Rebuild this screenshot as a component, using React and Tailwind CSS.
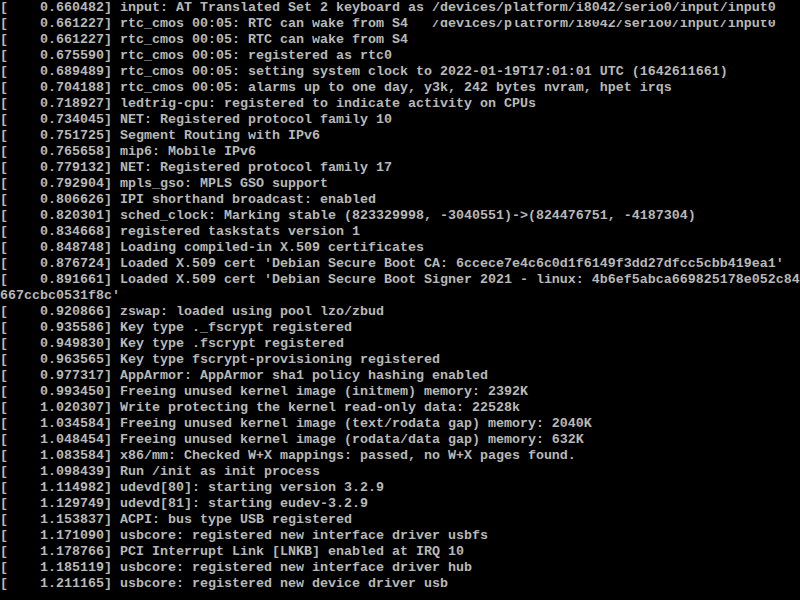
const LINES = [
  "[    0.660482] input: AT Translated Set 2 keyboard as /devices/platform/i8042/serio0/input/input0",
  null,
  "[    0.661227] rtc_cmos 00:05: RTC can wake from S4",
  "[    0.675590] rtc_cmos 00:05: registered as rtc0",
  "[    0.689489] rtc_cmos 00:05: setting system clock to 2022-01-19T17:01:01 UTC (1642611661)",
  "[    0.704188] rtc_cmos 00:05: alarms up to one day, y3k, 242 bytes nvram, hpet irqs",
  "[    0.718927] ledtrig-cpu: registered to indicate activity on CPUs",
  "[    0.734045] NET: Registered protocol family 10",
  "[    0.751725] Segment Routing with IPv6",
  "[    0.765658] mip6: Mobile IPv6",
  "[    0.779132] NET: Registered protocol family 17",
  "[    0.792904] mpls_gso: MPLS GSO support",
  "[    0.806626] IPI shorthand broadcast: enabled",
  "[    0.820301] sched_clock: Marking stable (823329998, -3040551)->(824476751, -4187304)",
  "[    0.834668] registered taskstats version 1",
  "[    0.848748] Loading compiled-in X.509 certificates",
  "[    0.876724] Loaded X.509 cert 'Debian Secure Boot CA: 6ccece7e4c6c0d1f6149f3dd27dfcc5cbb419ea1'",
  "[    0.891661] Loaded X.509 cert 'Debian Secure Boot Signer 2021 - linux: 4b6ef5abca669825178e052c84",
  "667ccbc0531f8c'",
  "[    0.920866] zswap: loaded using pool lzo/zbud",
  "[    0.935586] Key type ._fscrypt registered",
  "[    0.949830] Key type .fscrypt registered",
  "[    0.963565] Key type fscrypt-provisioning registered",
  "[    0.977317] AppArmor: AppArmor sha1 policy hashing enabled",
  "[    0.993450] Freeing unused kernel image (initmem) memory: 2392K",
  "[    1.020307] Write protecting the kernel read-only data: 22528k",
  "[    1.034584] Freeing unused kernel image (text/rodata gap) memory: 2040K",
  "[    1.048454] Freeing unused kernel image (rodata/data gap) memory: 632K",
  "[    1.083584] x86/mm: Checked W+X mappings: passed, no W+X pages found.",
  "[    1.098439] Run /init as init process",
  "[    1.114982] udevd[80]: starting version 3.2.9",
  "[    1.129749] udevd[81]: starting eudev-3.2.9",
  "[    1.153837] ACPI: bus type USB registered",
  "[    1.171090] usbcore: registered new interface driver usbfs",
  "[    1.178766] PCI Interrupt Link [LNKB] enabled at IRQ 10",
  "[    1.185119] usbcore: registered new interface driver hub",
  "[    1.211165] usbcore: registered new device driver usb",
];

export default function App() {
  return (
    <div className="w-[800px] h-[600px] overflow-hidden bg-black text-[#b8b8b8] font-['Liberation_Mono',monospace] font-bold text-[13.3333px] leading-[16px]">
      {LINES.map((line, i) =>
        line === null ? (
          // stale text left over from the previous line's redraw
          <div key={i} className="h-4 whitespace-pre">
            <span>[    0.661227] rtc_cmos 00:05: RTC can wake from S4   </span>
            <span className="inline-block align-top [clip-path:inset(4px_0_0_0)]">
              /devices/platform/i8042/serio0/input/input0
            </span>
          </div>
        ) : (
          <div key={i} className="h-4 whitespace-pre">
            {line}
          </div>
        )
      )}
    </div>
  );
}
